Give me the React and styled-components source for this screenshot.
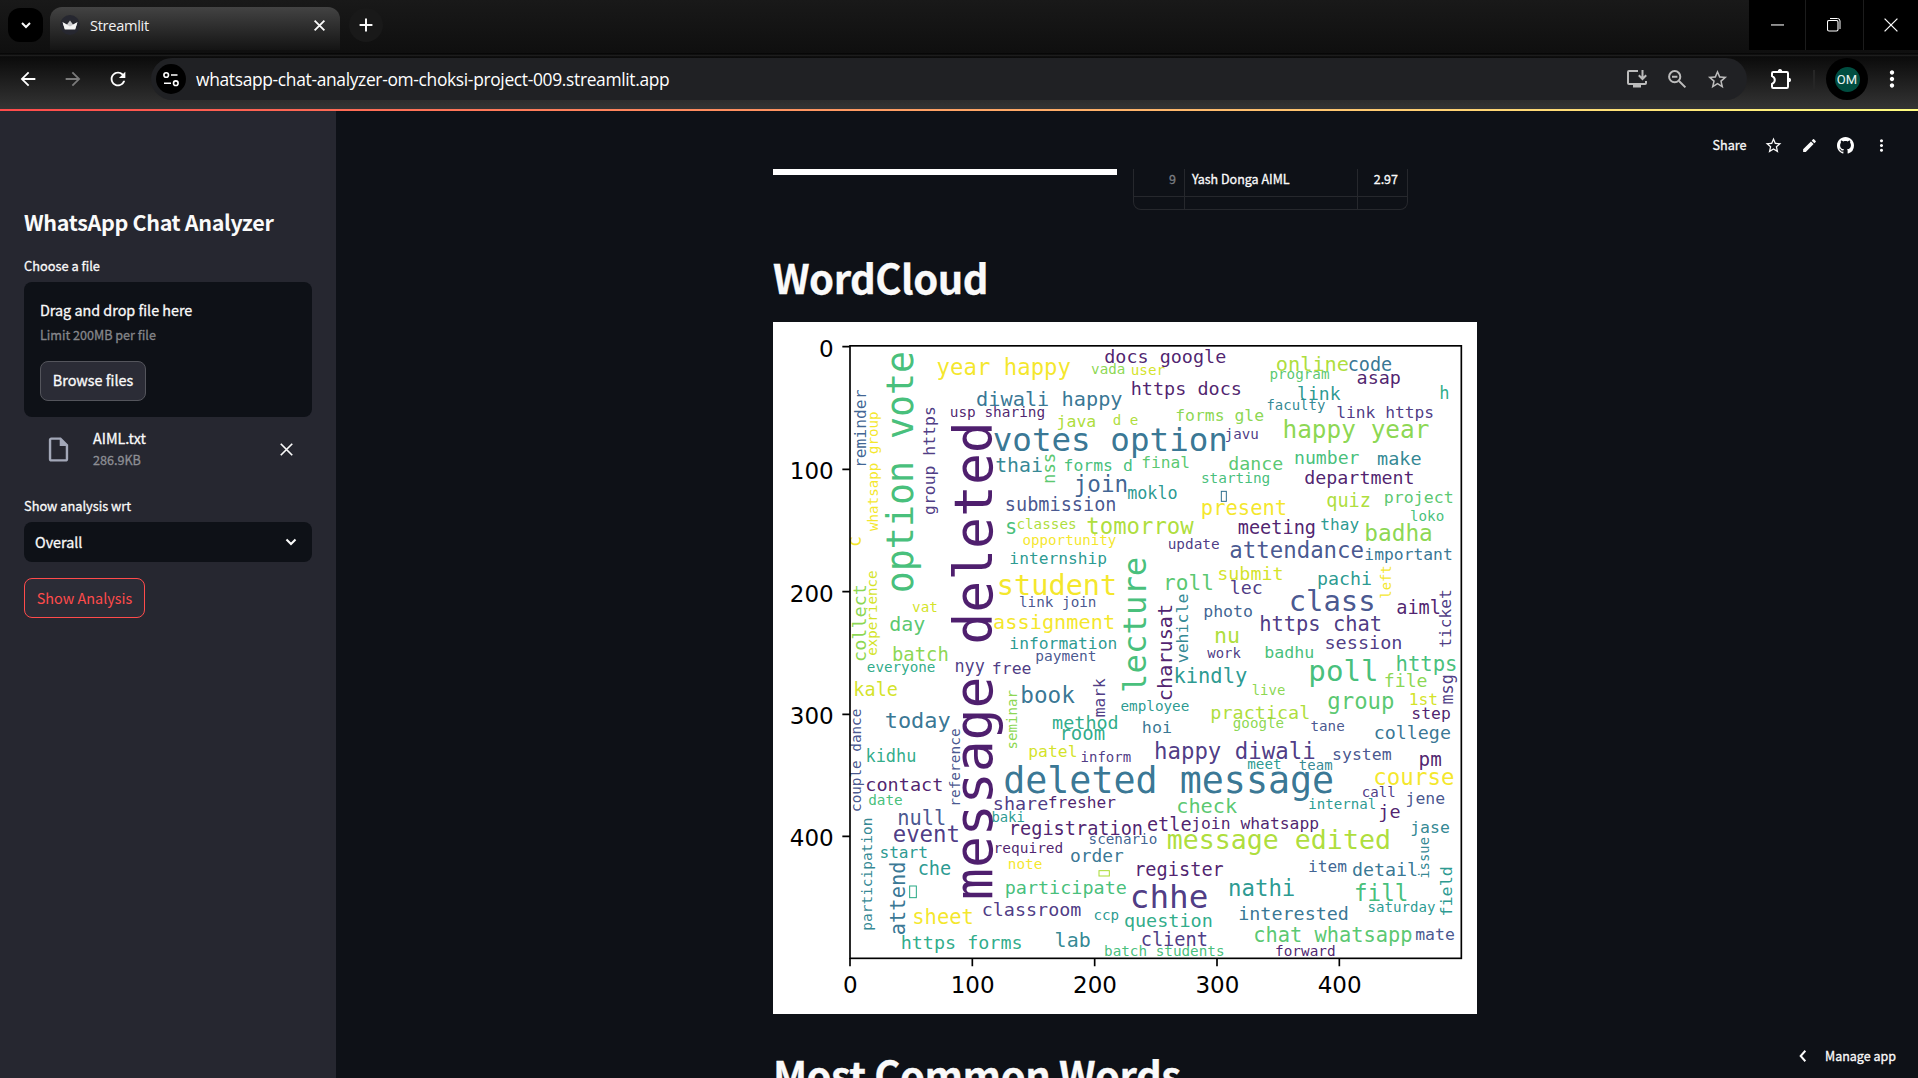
import React from "react";
import styled, { createGlobalStyle } from "styled-components";
import {
  MdArrowBack,
  MdArrowForward,
  MdRefresh,
  MdStarOutline,
  MdMoreVert,
  MdEdit,
  MdOutlineInsertDriveFile,
} from "react-icons/md";

const sans = `"Noto Sans CJK SC", "Noto Sans", sans-serif`;
const chromeSans = `"Open Sans", "Noto Sans", sans-serif`;

const GlobalStyle = createGlobalStyle`
  * { box-sizing: border-box; }
  body { margin: 0; background: #0e1117; overflow: hidden; }
`;

const Window = styled.div`
  display: flex;
  flex-direction: column;
  width: 1918px;
  height: 1078px;
  overflow: hidden;
  background: #0e1117;
  color: #fafafa;
  font-family: ${sans};
`;

/* ---------- browser frame ---------- */

const TabStrip = styled.div`
  display: flex;
  align-items: flex-start;
  height: 57px;
  flex: none;
  padding-left: 8px;
  background: linear-gradient(#191919, #0f0f0f 53px, #000 54px, #1d1d1d 55px, #1d1d1d 56px, #000 57px);
`;

const TabSearch = styled.div`
  display: flex;
  align-items: center;
  justify-content: center;
  width: 35px;
  height: 34px;
  margin-top: 8px;
  border-radius: 12px;
  background: #000;
`;

const Tab = styled.div`
  display: flex;
  align-items: center;
  width: 290px;
  height: 43px;
  margin: 7px 0 0 7px;
  padding: 0 14px 7px 10px;
  border-radius: 12px 12px 0 0;
  background: linear-gradient(#434343, #141414);
`;

const Favicon = styled.div`
  display: flex;
  align-items: center;
  justify-content: center;
  width: 20px;
  height: 20px;
  border-radius: 50%;
  background: #262730;
`;

const TabTitle = styled.div`
  flex: 1;
  margin-left: 10px;
  font: 14.6px/20px ${chromeSans};
  letter-spacing: -0.3px;
  color: #f1f1f1;
`;

const NewTab = styled.div`
  display: flex;
  align-items: center;
  justify-content: center;
  width: 34px;
  height: 34px;
  margin: 8px 0 0 9px;
  border-radius: 50%;
  background: #191919;
`;

const WindowButtons = styled.div`
  display: flex;
  gap: 1px;
  height: 50px;
  margin-left: auto;
  background: #1c1c1c;
`;

const WindowButton = styled.div`
  display: flex;
  align-items: center;
  justify-content: center;
  width: ${(p) => p.$width}px;
  padding-right: ${(p) => p.$nudge || 0}px;
  background: #000;
`;

const Toolbar = styled.div`
  display: flex;
  align-items: flex-start;
  height: 52px;
  flex: none;
  padding-top: 1px;
  background: linear-gradient(#0b0b0b, #343434);
`;

const NavButton = styled.div`
  display: flex;
  align-items: center;
  justify-content: center;
  width: 45px;
  height: 42px;
  color: ${(p) => (p.$disabled ? "#7a7a7a" : "#fff")};
  font-size: 22px;
`;

const NavGroup = styled.div`
  display: flex;
  width: 151px;
  padding-left: 5px;
`;

const AddressBar = styled.div`
  display: flex;
  align-items: center;
  width: 1596px;
  height: 42px;
  padding: 0 18px 0 5px;
  border-radius: 21px;
  background: #202124;
`;

const SiteInfo = styled.div`
  display: flex;
  align-items: center;
  justify-content: center;
  width: 30px;
  height: 30px;
  border-radius: 50%;
  background: #000;
`;

const Url = styled.div`
  flex: 1;
  margin-left: 10px;
  font: 17.4px/24px ${chromeSans};
  letter-spacing: -0.33px;
  color: #fff;
`;

const AddressIcons = styled.div`
  display: flex;
  align-items: center;
  gap: 19px;
  color: #bcbcbc;
`;

const ToolbarEnd = styled.div`
  display: flex;
  align-items: center;
  height: 42px;
  flex: 1;
  padding-left: 23px;
`;

const Separator = styled.div`
  width: 2px;
  height: 19px;
  margin: 0 11px 0 20px;
  background: #262626;
`;

const Profile = styled.div`
  display: flex;
  align-items: center;
  justify-content: center;
  width: 42px;
  height: 42px;
  border-radius: 50%;
  background: #000;
`;

const Avatar = styled.div`
  width: 25px;
  height: 25px;
  border-radius: 50%;
  background: #004d40;
  color: #e8f3f1;
  text-align: center;
  font: 13px/25px Roboto, sans-serif;
`;

const MenuDots = styled.div`
  display: flex;
  margin-left: 11px;
  font-size: 26px;
  color: #fff;
`;

/* ---------- app ---------- */

const Decoration = styled.div`
  height: 2px;
  flex: none;
  background: linear-gradient(90deg, #ff4b4b, #fffd80);
`;

const AppBody = styled.div`
  display: flex;
  flex: 1;
  min-height: 0;
  -webkit-text-stroke: 0.3px;
`;

const Sidebar = styled.aside`
  display: flex;
  flex-direction: column;
  width: 336px;
  padding: 95px 24px 0;
  background: #262730;
`;

const SidebarTitle = styled.h2`
  margin: 0;
  font-size: 21.5px;
  font-weight: 600;
  line-height: 32px;
  letter-spacing: -0.34px;
  white-space: nowrap;
  -webkit-text-stroke: 0;
`;

const Label = styled.div`
  margin-top: ${(p) => p.$top}px;
  height: 20px;
  font-size: 12.8px;
  line-height: 20px;
`;

const Dropzone = styled.div`
  display: flex;
  flex-direction: column;
  align-items: flex-start;
  height: 135px;
  margin-top: 6px;
  padding: 16px;
  border-radius: 8px;
  background: #0e1117;
`;

const Strong = styled.div`
  font-size: 14.35px;
  line-height: ${(p) => p.$line || 24}px;
`;

const Muted = styled.div`
  margin-top: ${(p) => p.$top || 0}px;
  font-size: 12.6px;
  line-height: 20px;
  color: ${(p) => p.$color || "#85868a"};
`;

const Button = styled.button`
  height: 40px;
  width: ${(p) => p.$width}px;
  margin-top: ${(p) => p.$top}px;
  padding: 0 0 ${(p) => (p.$accent ? 1 : 2)}px;
  border: 1px solid ${(p) => (p.$accent ? "#ff4b4b" : "#54555c")};
  border-radius: 8px;
  background: #2b2c36;
  color: ${(p) => (p.$accent ? "#ff4b4b" : "#fafafa")};
  font: 400 14.4px/24px ${sans};
  -webkit-text-stroke: ${(p) => (p.$accent ? 0 : 0.3)}px;
`;

const FileRow = styled.div`
  display: flex;
  align-items: center;
  height: 64px;
  padding: 0 16px;
`;

const FileIcon = styled.div`
  display: flex;
  width: 53px;
  padding-left: 3.5px;
  color: #a3a8b8;
  font-size: 29px;
`;

const FileInfo = styled.div`
  flex: 1;
`;

const RemoveFile = styled.div`
  display: flex;
  padding-right: 3px;
`;

const Select = styled.div`
  display: flex;
  align-items: center;
  justify-content: space-between;
  height: 40px;
  margin-top: 6px;
  padding: 0 15px 0 11px;
  border-radius: 8px;
  background: #0e1117;
`;

const Main = styled.main`
  display: flex;
  flex-direction: column;
  flex: 1;
  min-width: 0;
`;

const AppHeader = styled.header`
  display: flex;
  align-items: center;
  justify-content: flex-end;
  height: 58px;
  flex: none;
  padding: 10px 18.5px 0 0;
  font-size: 12.6px;
`;

const HeaderIcon = styled.div`
  display: flex;
  align-items: center;
  justify-content: center;
  width: 36px;
  height: 36px;
  font-size: ${(p) => p.$size}px;
`;

const ShareLabel = styled.div`
  margin-right: 9px;
  line-height: 20px;
`;

const Content = styled.section`
  display: flex;
  flex-direction: column;
  width: 704px;
  flex: 1;
  min-height: 0;
  margin-left: 437px;
  overflow: hidden;
`;

const TopRow = styled.div`
  display: flex;
  gap: 16px;
  height: 41px;
  flex: none;
`;

const ChartEnd = styled.div`
  width: 344px;
  height: 6px;
  background: #fff;
`;

const Table = styled.div`
  display: grid;
  grid-template-columns: 51px 173px 51px;
  grid-template-rows: 28px 13px;
  width: 275px;
  overflow: hidden;
  border: 1px solid #26282d;
  border-top: 0;
  border-radius: 0 0 8px 8px;
`;

const Cell = styled.div`
  padding: 0 ${(p) => p.$end || 8}px 0 7px;
  border-right: 1px solid #26282d;
  border-bottom: 1px solid #26282d;
  font-size: 12.5px;
  line-height: 20px;
  text-align: ${(p) => p.$align || "left"};
  color: ${(p) => (p.$dim ? "#7b7d82" : "#fafafa")};
  white-space: nowrap;
`;

const Heading = styled.h1`
  margin: ${(p) => p.$top}px 0 0;
  height: 56px;
  flex: none;
  font-size: 40px;
  font-weight: 700;
  line-height: 56px;
  letter-spacing: -0.5px;
  white-space: nowrap;
  -webkit-text-stroke: 0.3px;
`;

const Figure = styled.svg`
  display: block;
  flex: none;
  width: 704px;
  height: 692px;
  margin-top: 17px;
  background: #fff;
  -webkit-text-stroke: 0;
`;

const ManageApp = styled.div`
  position: absolute;
  left: 1796px;
  top: 1044px;
  display: flex;
  align-items: center;
  gap: 15px;
  font-size: 12.5px;
  line-height: 24px;
  white-space: nowrap;
  -webkit-text-stroke: 0.3px;
`;

/* ---------- word cloud data ---------- */

const P = "#481668", V = "#46327e", I = "#3f4f8a", B = "#365c8d", S = "#2e6f8e", T = "#2a828e",
  C = "#21958b", E = "#26a884", G = "#3dbc74", L = "#52c569", M = "#86d549", K = "#aadc32", Y = "#d2e21b", Z = "#f4e61e";

/* Horizontal entries: [text, ink left, ink right, baseline, colour] */
/* Vertical entries:   [text, ink top, ink bottom, baseline x, colour] */
const tiles = [
  {
    x: -9,
    y: -6,
    across: [
      ["year happy", 503, 901, 165, Z], ["docs google", 1006, 1366, 129, P], ["vada", 965, 1063, 162, M],
      ["diwali happy", 622, 1056, 258, S], ["usp sharing", 543, 822, 292, P], ["java", 864, 975, 320, K],
      ["d e", 1031, 1103, 314, K], ["votes option", 672, 1366, 392, S], ["thai", 679, 815, 457, T],
      ["forms d", 885, 1084, 453, G], ["join", 917, 1069, 515, B], ["submission", 710, 1035, 574, I],
      ["s", 711, 736, 641, G], ["classes", 743, 916, 627, K], ["opportunity", 760, 1038, 675, Z],
      ["internship", 722, 1009, 733, C], ["student", 689, 1034, 826, Z], ["link join", 750, 976, 862, I],
      ["assignment", 673, 1030, 926, Z], ["information", 722, 1038, 987, C], ["payment", 800, 976, 1024, I],
      ["vat", 428, 500, 877, Y], ["day", 361, 464, 934, L], ["batch", 371, 532, 1022, M],
      ["tomorrow", 953, 1272, 643, K],
    ],
    up: [
      ["reminder", 210, 436, 287, B], ["whatsapp group", 276, 633, 323, Z], ["option vote", 98, 813, 428, G],
      ["group https", 263, 582, 495, V], ["message deleted", 318, 1732, 665, P], ["nss", 403, 487, 854, L],
      ["c", 652, 676, 273, Z], ["collect", 797, 1021, 287, M], ["experience", 753, 1005, 320, Y],
    ],
    boxes: [],
  },
  {
    x: 1041,
    y: -6,
    across: [
      ["user", 36, 134, 166, Y], ["online", 471, 684, 152, K], ["code", 688, 814, 153, S], ["program", 452, 627, 177, L],
      ["asap", 713, 840, 191, P], ["https docs", 37, 361, 226, P], ["link", 535, 661, 240, C],
      ["faculty", 443, 615, 269, T], ["link https", 652, 938, 295, V], ["h", 962, 984, 236, E],
      ["forms gle", 170, 430, 304, M], ["happy year", 494, 926, 354, M], ["javu", 318, 413, 357, V],
      ["number", 527, 717, 431, G], ["make", 774, 902, 434, T], ["final", 68, 206, 443, L],
      ["dance", 328, 487, 449, L], ["starting", 247, 447, 489, G], ["department", 556, 879, 491, P],
      ["moklo", 24, 170, 538, C], ["present", 248, 496, 584, Z], ["quiz", 622, 748, 560, K],
      ["project", 796, 997, 549, L], ["loko", 873, 970, 603, G], ["meeting", 356, 583, 641, P],
      ["thay", 604, 716, 629, C], ["badha", 739, 933, 662, M], ["update", 147, 297, 688, V],
      ["attendance", 332, 729, 713, I], ["important", 737, 994, 721, S], ["submit", 297, 486, 780, Y],
      ["pachi", 596, 753, 794, C], ["roll", 140, 276, 809, L], ["lec", 333, 424, 823, V],
      ["class", 514, 759, 873, I], ["aiml", 832, 958, 882, P], ["photo", 254, 396, 892, B],
      ["https chat", 423, 781, 934, V], ["nu", 288, 355, 970, K], ["session", 619, 843, 986, V],
      ["work", 262, 362, 1014, V], ["badhu", 437, 579, 1015, G], ["https", 832, 1007, 1052, G],
    ],
    up: [
      ["lecture", 715, 1112, 78, G], ["charusat", 857, 1138, 156, P], ["vehicle", 823, 1028, 204, T],
      ["left", 740, 833, 812, Z], ["ticket", 812, 980, 994, V],
    ],
    boxes: [[304, 514, 15, 30, S]],
  },
  {
    x: -9,
    y: 1014,
    across: [
      ["everyone", 293, 494, 37, E], ["nyy", 558, 643, 37, V], ["free", 670, 782, 42, V], ["kale", 256, 381, 108, Y],
      ["today", 348, 540, 204, S], ["book", 757, 914, 130, S], ["method", 849, 1041, 208, E],
      ["room", 878, 1003, 241, E], ["patel", 779, 918, 290, Y], ["inform", 935, 1082, 306, V],
      ["kidhu", 292, 435, 307, E], ["contact", 291, 515, 393, P], ["date", 297, 396, 436, G],
      ["deleted message", 706, 1687, 398, S], ["share", 674, 832, 451, V], ["fresher", 838, 1037, 444, P],
      ["null", 387, 523, 495, I], ["event", 372, 564, 545, V], ["baki", 668, 762, 485, C],
      ["registration", 726, 1115, 524, P], ["scenario", 960, 1159, 553, B], ["required", 678, 876, 579, P],
      ["order", 903, 1060, 605, S], ["start", 333, 470, 594, C], ["che", 448, 541, 645, C],
      ["note", 717, 815, 627, Z], ["participate", 709, 1068, 701, G], ["classroom", 640, 932, 767, V],
      ["ccp", 974, 1045, 779, C], ["sheet", 433, 606, 791, Z], ["https forms", 397, 753, 867, E],
      ["lab", 858, 959, 862, T], ["batch students", 1006, 1360, 887, G],
    ],
    up: [
      ["mark", 55, 169, 1005, V], ["seminar", 91, 264, 742, M], ["couple dance", 148, 452, 272, I],
      ["reference", 207, 433, 570, I], ["participation", 476, 808, 306, T], ["attend", 610, 822, 405, S],
    ],
    boxes: [[419, 678, 20, 35, E], [987, 632, 31, 16, K]],
  },
  {
    x: 1041,
    y: 1014,
    across: [
      ["poll", 573, 768, 62, G], ["kindly", 167, 380, 69, C], ["live", 398, 494, 105, M], ["file", 796, 920, 80, M],
      ["group", 626, 820, 146, L], ["1st", 872, 950, 134, Y], ["step", 879, 990, 177, P],
      ["employee", 4, 206, 153, C], ["practical", 276, 566, 176, K], ["google", 341, 490, 204, M],
      ["tane", 574, 672, 212, I], ["hoi", 70, 153, 219, S], ["college", 766, 990, 236, S],
      ["happy diwali", 108, 583, 296, V], ["system", 641, 813, 299, I], ["pm", 901, 963, 317, P],
      ["meet", 384, 481, 326, C], ["team", 539, 636, 329, T], ["course", 766, 1000, 375, Z],
      ["call", 729, 823, 410, V], ["jene", 861, 973, 431, I], ["check", 174, 351, 460, L],
      ["internal", 568, 765, 447, C], ["je", 780, 839, 473, P], ["jase", 875, 987, 518, T],
      ["etle", 84, 212, 513, P], ["join whatsapp", 218, 595, 507, P], ["message edited", 144, 806, 567, K],
      ["item", 568, 679, 635, B], ["detail", 699, 889, 649, S], ["register", 52, 310, 649, P],
      ["chhe", 38, 260, 743, V], ["nathi", 330, 522, 708, C], ["fill", 708, 859, 723, G],
      ["saturday", 747, 945, 756, C], ["question", 15, 274, 800, E], ["interested", 359, 682, 781, S],
      ["client", 67, 259, 857, V], ["chat whatsapp", 405, 875, 847, L], ["mate", 888, 1002, 840, I],
      ["forward", 469, 643, 887, P],
    ],
    up: [["msg", 47, 131, 999, V], ["issue", 533, 653, 927, T], ["field", 623, 765, 995, C]],
    boxes: [],
  },
];

const WORD_FONT = `"DejaVu Sans Mono", monospace`;
const pen = document.createElement("canvas").getContext("2d");
pen.font = `100px ${WORD_FONT}`;

/* Font size and pen start that fill the ink span from..to. */
function fit(text, from, to) {
  const m = pen.measureText(text);
  const left = -m.actualBoundingBoxLeft / 100;
  const right = m.actualBoundingBoxRight / 100;
  const size = (to - from) / (right - left);
  return { size, offset: (size * (right + left)) / 2 };
}

function Word({ entry, vertical }) {
  const [text, from, to, base, color] = entry;
  const { size, offset } = fit(text, from, to);
  const mid = (from + to) / 2;
  const place = vertical ? `translate(${base} ${mid + offset}) rotate(-90)` : `translate(${mid - offset} ${base})`;
  return (
    <text transform={place} fill={color} fillOpacity="0.96" fontSize={size} fontFamily={WORD_FONT} xmlSpace="preserve">
      {text}
    </text>
  );
}

const ticks = [
  { label: "0", x: 231, y: 74 },
  { label: "100", x: 598, y: 442 },
  { label: "200", x: 965, y: 809 },
  { label: "300", x: 1332, y: 1177 },
  { label: "400", x: 1699, y: 1543 },
];

function WordCloud() {
  return (
    <Figure viewBox="0 0 2112 2076">
      {tiles.map((t, i) => (
        <g key={i} transform={`translate(${t.x} ${t.y})`}>
          {t.across.map((e) => <Word key={e[0]} entry={e} />)}
          {t.up.map((e) => <Word key={e[0]} entry={e} vertical />)}
          {t.boxes.map(([x, y, w, h, c]) => (
            <rect key={x} x={x} y={y} width={w} height={h} fill="none" stroke={c} strokeWidth="3" />
          ))}
        </g>
      ))}
      <g stroke="#000" strokeWidth="5" fill="none">
        <rect x="231" y="71.5" width="1834" height="1837.5" />
        {ticks.map((t) => (
          <path key={t.label} d={`M208 ${t.y}H231M${t.x} 1909V1933`} />
        ))}
      </g>
      <g fontFamily='"DejaVu Sans", sans-serif' fontSize="69" fill="#000">
        {ticks.map((t) => (
          <React.Fragment key={t.label}>
            <text x="182" y={t.y + 30} textAnchor="end">{t.label}</text>
            <text x={t.x + 1} y="2013" textAnchor="middle">{t.label}</text>
          </React.Fragment>
        ))}
      </g>
    </Figure>
  );
}

/* ---------- icons ---------- */

const Line = ({ size = 12, box = 12, width = 1.6, d, color = "currentColor" }) => (
  <svg width={size} height={size} viewBox={`0 0 ${box} ${box}`} fill="none" stroke={color} strokeWidth={width}>
    <path d={d} />
  </svg>
);

const Crown = () => (
  <svg width="16" height="10" viewBox="0 0 16 10">
    <path d="M0.6 2.2 5 4.6 8 0.6 11 4.6 15.4 2.2 13.4 8.5H2.6Z" fill="#c9c9cd" />
    <path d="M0.6 2.2 8 6.4 15.4 2.2 13.2 9.4H2.8Z" fill="#f4f4f5" />
  </svg>
);

const Tune = () => (
  <svg width="16" height="16" viewBox="0 0 16 16" fill="none" stroke="#fff" strokeWidth="1.6">
    <circle cx="3.2" cy="4" r="2.3" />
    <path d="M8 4H14.5M1 12.2H8" />
    <circle cx="12.8" cy="12.2" r="2.3" />
  </svg>
);

const InstallIcon = () => (
  <svg width="22" height="20" viewBox="0 0 22 20" fill="none" stroke="currentColor" strokeWidth="2">
    <path d="M12 2H3Q2 2 2 3V14Q2 15 3 15H19Q20 15 20 14V12" />
    <path d="M16.5 1V10M12.8 6.3 16.5 10 20.2 6.3" />
    <path d="M7 17H15" strokeWidth="3" />
  </svg>
);

const ZoomOutIcon = () => (
  <svg width="20" height="20" viewBox="0 0 20 20" fill="none" stroke="currentColor" strokeWidth="2">
    <circle cx="7.7" cy="7.7" r="5.6" />
    <path d="M5 7.7H10.4M12 12 18.4 18.4" />
  </svg>
);

const PuzzleIcon = () => (
  <svg width="23" height="22" viewBox="0 0 23 22">
    <path
      d="M3.2 4H16.8Q18 4 18 5.2V18.8Q18 20 16.8 20H3.2Q2 20 2 18.8V15.8Q4.8 14.6 4.8 12T2 8.2V5.2Q2 4 3.2 4Z"
      fill="none" stroke="#fff" strokeWidth="2" strokeLinejoin="round"
    />
    <path d="M7.8 3.7A2.2 2.7 0 0 1 12.2 3.7ZM18.3 9.8A2.7 2.2 0 0 1 18.3 14.2Z" fill="#fff" />
  </svg>
);

const GithubIcon = () => (
  <svg width="17" height="17" viewBox="0 0 16 16" fill="#fff">
    <path d="M8 0C3.58 0 0 3.58 0 8c0 3.54 2.29 6.53 5.47 7.59.4.07.55-.17.55-.38 0-.19-.01-.82-.01-1.49-2.01.37-2.53-.49-2.69-.94-.09-.23-.48-.94-.82-1.13-.28-.15-.68-.52-.01-.53.63-.01 1.08.58 1.23.82.72 1.21 1.87.87 2.33.66.07-.52.28-.87.51-1.07-1.78-.2-3.64-.89-3.64-3.95 0-.87.31-1.59.82-2.15-.08-.2-.36-1.02.08-2.12 0 0 .67-.21 2.2.82.64-.18 1.32-.27 2-.27s1.36.09 2 .27c1.53-1.04 2.2-.82 2.2-.82.44 1.1.16 1.92.08 2.12.51.56.82 1.27.82 2.15 0 3.07-1.87 3.75-3.65 3.95.29.25.54.73.54 1.48 0 1.07-.01 1.93-.01 2.2 0 .21.15.46.55.38A8.01 8.01 0 0 0 16 8c0-4.42-3.58-8-8-8Z" />
  </svg>
);

const RestoreIcon = () => (
  <svg width="14" height="14" viewBox="0 0 14 14" fill="none" stroke="#fff">
    <path d="M3 0.5H10.5Q13 0.5 13 3V11" strokeWidth="1" />
    <rect x="0.5" y="2.5" width="10.5" height="10.5" rx="1.5" strokeWidth="1.1" />
  </svg>
);

export default function App() {
  return (
    <Window>
      <GlobalStyle />
      <TabStrip>
        <TabSearch><Line size={12} width={2} d="M2 4 6 8 10 4" /></TabSearch>
        <Tab>
          <Favicon><Crown /></Favicon>
          <TabTitle>Streamlit</TabTitle>
          <Line size={13} width={1.7} d="M1.5 1.5 10.5 10.5M10.5 1.5 1.5 10.5" />
        </Tab>
        <NewTab><Line size={14} width={1.7} d="M6 0.5V11.5M0.5 6H11.5" /></NewTab>
        <WindowButtons>
          <WindowButton $width={56}><Line size={13} width={1} d="M0 5.5H12" /></WindowButton>
          <WindowButton $width={57} $nudge={2}><RestoreIcon /></WindowButton>
          <WindowButton $width={54}><Line size={14} width={1.1} d="M0.5 0.5 11.5 11.5M11.5 0.5 0.5 11.5" /></WindowButton>
        </WindowButtons>
      </TabStrip>
      <Toolbar>
        <NavGroup>
          <NavButton><MdArrowBack /></NavButton>
          <NavButton $disabled><MdArrowForward /></NavButton>
          <NavButton><MdRefresh /></NavButton>
        </NavGroup>
        <AddressBar>
          <SiteInfo><Tune /></SiteInfo>
          <Url>whatsapp-chat-analyzer-om-choksi-project-009.streamlit.app</Url>
          <AddressIcons>
            <InstallIcon />
            <ZoomOutIcon />
            <MdStarOutline size={23} />
          </AddressIcons>
        </AddressBar>
        <ToolbarEnd>
          <PuzzleIcon />
          <Separator />
          <Profile><Avatar>OM</Avatar></Profile>
          <MenuDots><MdMoreVert /></MenuDots>
        </ToolbarEnd>
      </Toolbar>
      <Decoration />
      <AppBody>
        <Sidebar>
          <SidebarTitle>WhatsApp Chat Analyzer</SidebarTitle>
          <Label $top={18}>Choose a file</Label>
          <Dropzone>
            <Strong>Drag and drop file here</Strong>
            <Muted $top={3}>Limit 200MB per file</Muted>
            <Button $width={106} $top={16}>Browse files</Button>
          </Dropzone>
          <FileRow>
            <FileIcon><MdOutlineInsertDriveFile /></FileIcon>
            <FileInfo>
              <Strong $line={20}>AIML.txt</Strong>
              <Muted $top={2} $color="#8d8e94">286.9KB</Muted>
            </FileInfo>
            <RemoveFile><Line size={13} width={1.6} d="M0.7 0.7 11.3 11.3M11.3 0.7 0.7 11.3" /></RemoveFile>
          </FileRow>
          <Label $top={15}>Show analysis wrt</Label>
          <Select>
            <Strong>Overall</Strong>
            <Line size={12} width={2.1} d="M1.5 3.5 6 8 10.5 3.5" />
          </Select>
          <Button $accent $width={121} $top={16}>Show Analysis</Button>
        </Sidebar>
        <Main>
          <AppHeader>
            <ShareLabel>Share</ShareLabel>
            <HeaderIcon $size={19}><MdStarOutline /></HeaderIcon>
            <HeaderIcon $size={17}><MdEdit /></HeaderIcon>
            <HeaderIcon><GithubIcon /></HeaderIcon>
            <HeaderIcon $size={19}><MdMoreVert /></HeaderIcon>
          </AppHeader>
          <Content>
            <TopRow>
              <ChartEnd />
              <Table>
                <Cell $align="right" $dim>9</Cell>
                <Cell>Yash Donga AIML</Cell>
                <Cell $align="right" $end={10}>2.97</Cell>
                <Cell />
                <Cell />
                <Cell />
              </Table>
            </TopRow>
            <Heading $top={39}>WordCloud</Heading>
            <WordCloud />
            <Heading $top={32}>Most Common Words</Heading>
          </Content>
        </Main>
      </AppBody>
      <ManageApp>
        <Line size={14} width={1.7} d="M8 1.5 4 6 8 10.5" />
        <span>Manage app</span>
      </ManageApp>
    </Window>
  );
}
